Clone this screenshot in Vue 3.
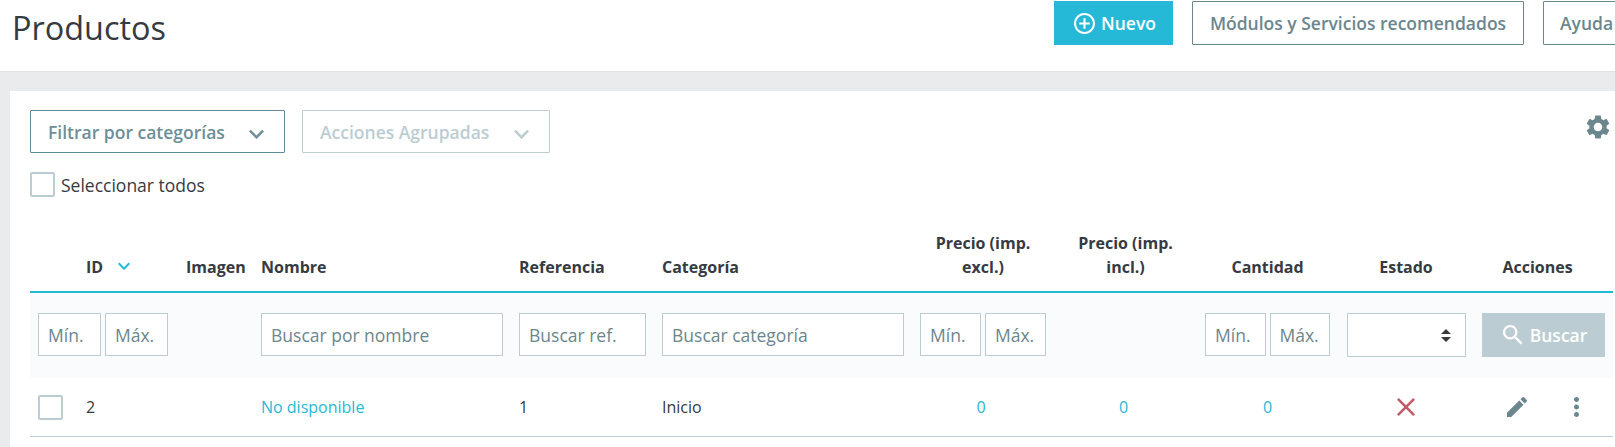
<template>
  <div class="page">
    <header class="head">
      <h1 class="title">Productos</h1>
      <button class="btn-new">
        <svg class="ico-new" viewBox="2 2 20 20"><path :d="icons.add" /></svg>
        Nuevo
      </button>
      <button class="btn-line">Módulos y Servicios recomendados</button>
      <button class="btn-line btn-help">Ayuda</button>
    </header>

    <main class="card">
      <div class="tools">
        <button class="drop">
          Filtrar por categorías
          <svg class="chev" viewBox="6 8 12 8"><path :d="icons.chevron" /></svg>
        </button>
        <button class="drop drop-off">
          Acciones Agrupadas
          <svg class="chev" viewBox="6 8 12 8"><path :d="icons.chevron" /></svg>
        </button>
        <svg class="gear" viewBox="2.5 2 19 20"><path :d="icons.gear" /></svg>
      </div>

      <label class="select-all">
        <span class="box"></span>
        <span class="select-text">Seleccionar todos</span>
      </label>

      <table class="grid">
        <colgroup>
          <col v-for="w in widths" :key="w.id" :style="{ width: w.px + 'px' }" />
        </colgroup>
        <thead>
          <tr class="titles">
            <th></th>
            <th>
              <span class="sort">ID
                <svg class="sort-ico" viewBox="6 8 12 8"><path :d="icons.chevron" /></svg>
              </span>
            </th>
            <th>Imagen</th>
            <th>Nombre</th>
            <th>Referencia</th>
            <th>Categoría</th>
            <th class="mid">Precio (imp. excl.)</th>
            <th class="mid">Precio (imp. incl.)</th>
            <th class="mid">Cantidad</th>
            <th class="mid">Estado</th>
            <th class="mid acts">Acciones</th>
          </tr>
          <tr class="filters">
            <td colspan="2">
              <div class="pair pair-id">
                <input placeholder="Mín." />
                <input placeholder="Máx." />
              </div>
            </td>
            <td></td>
            <td><input placeholder="Buscar por nombre" /></td>
            <td><input placeholder="Buscar ref." /></td>
            <td><input placeholder="Buscar categoría" /></td>
            <td>
              <div class="pair">
                <input placeholder="Mín." />
                <input placeholder="Máx." />
              </div>
            </td>
            <td></td>
            <td>
              <div class="pair">
                <input placeholder="Mín." />
                <input placeholder="Máx." />
              </div>
            </td>
            <td>
              <div class="state">
                <svg class="updown" viewBox="0 0 10 13"><path d="M5 0l5 5H0zM0 8h10l-5 5z" /></svg>
              </div>
            </td>
            <td>
              <button class="btn-search">
                <svg class="ico-search" viewBox="3 3 18 18"><path :d="icons.search" /></svg>
                Buscar
              </button>
            </td>
          </tr>
        </thead>
        <tbody>
          <tr class="row">
            <td><span class="box"></span></td>
            <td>2</td>
            <td></td>
            <td><a class="link">No disponible</a></td>
            <td>1</td>
            <td>Inicio</td>
            <td class="mid nudge"><a class="link">0</a></td>
            <td class="mid nudge"><a class="link">0</a></td>
            <td class="mid"><a class="link">0</a></td>
            <td class="mid">
              <svg class="ico-x" viewBox="5 5 14 14"><path :d="icons.close" /></svg>
            </td>
            <td>
              <div class="row-acts">
                <svg class="ico-edit" viewBox="3 3 18 18"><path :d="icons.edit" /></svg>
                <svg class="ico-more" viewBox="10 4 4 16"><path :d="icons.more" /></svg>
              </div>
            </td>
          </tr>
        </tbody>
      </table>
    </main>
  </div>
</template>

<script setup>
const widths = [48, 100, 75, 258, 143, 258, 142, 143, 141, 136, 139].map((px, id) => ({ id, px }));

const icons = {
  add: 'M13 7h-2v4H7v2h4v4h2v-4h4v-2h-4V7zm-1-5C6.48 2 2 6.48 2 12s4.48 10 10 10 10-4.48 10-10S17.52 2 12 2zm0 18c-4.41 0-8-3.59-8-8s3.59-8 8-8 8 3.59 8 8-3.59 8-8 8z',
  chevron: 'M16.59 8.59L12 13.17 7.41 8.59 6 10l6 6 6-6z',
  gear: 'M19.14 12.94c.04-.3.06-.61.06-.94 0-.32-.02-.64-.07-.94l2.03-1.58c.18-.14.23-.41.12-.61l-1.92-3.32c-.12-.22-.37-.29-.59-.22l-2.39.96c-.5-.38-1.03-.7-1.62-.94l-.36-2.54c-.04-.24-.24-.41-.48-.41h-3.84c-.24 0-.43.17-.47.41l-.36 2.54c-.59.24-1.13.57-1.62.94l-2.39-.96c-.22-.08-.47 0-.59.22L2.74 8.87c-.12.21-.08.47.12.61l2.03 1.58c-.05.3-.09.63-.09.94s.02.64.07.94l-2.03 1.58c-.18.14-.23.41-.12.61l1.92 3.32c.12.22.37.29.59.22l2.39-.96c.5.38 1.03.7 1.62.94l.36 2.54c.05.24.24.41.48.41h3.84c.24 0 .44-.17.47-.41l.36-2.54c.59-.24 1.13-.56 1.62-.94l2.39.96c.22.08.47 0 .59-.22l1.92-3.32c.12-.22.07-.47-.12-.61l-2.01-1.58zM12 15.6c-1.98 0-3.6-1.62-3.6-3.6s1.62-3.6 3.6-3.6 3.6 1.62 3.6 3.6-1.62 3.6-3.6 3.6z',
  search: 'M15.5 14h-.79l-.28-.27C15.41 12.59 16 11.11 16 9.5 16 5.91 13.09 3 9.5 3S3 5.91 3 9.5 5.91 16 9.5 16c1.61 0 3.09-.59 4.23-1.57l.27.28v.79l5 4.99L20.49 19l-4.99-5zm-6 0C7.01 14 5 11.99 5 9.5S7.01 5 9.5 5 14 7.01 14 9.5 11.99 14 9.5 14z',
  edit: 'M3 17.25V21h3.75L17.81 9.94l-3.75-3.75L3 17.25zM20.71 7.04c.39-.39.39-1.02 0-1.41l-2.34-2.34c-.39-.39-1.02-.39-1.41 0l-1.83 1.83 3.75 3.75 1.83-1.83z',
  more: 'M12 8c1.1 0 2-.9 2-2s-.9-2-2-2-2 .9-2 2 .9 2 2 2zm0 2c-1.1 0-2 .9-2 2s.9 2 2 2 2-.9 2-2-.9-2-2-2zm0 6c-1.1 0-2 .9-2 2s.9 2 2 2 2-.9 2-2-.9-2-2-2z',
  close: 'M19 6.41L17.59 5 12 10.59 6.41 5 5 6.41 10.59 12 5 17.59 6.41 19 12 13.41 17.59 19 19 17.59 13.41 12z',
};
</script>

<style>
html, body {
  margin: 0;
  overflow: hidden;
}
</style>

<style scoped>
.page {
  width: 1615px;
  height: 447px;
  overflow: hidden;
  background: #eaebec;
  font-family: "Open Sans", "Noto Sans", sans-serif;
  font-size: 16px;
  color: #363a41;
}

button {
  font-family: inherit;
  cursor: pointer;
}

.head {
  display: flex;
  align-items: flex-start;
  height: 70px;
  padding: 1px 0 0 12px;
  background: #fff;
  border-bottom: 1px solid #dfe1e2;
}

.title {
  flex: 0 0 1042px;
  margin: 0;
  font-size: 32.4px;
  font-weight: 400;
  line-height: 52px;
}

.btn-new {
  display: flex;
  flex: none;
  align-items: center;
  justify-content: center;
  gap: 6px;
  width: 119px;
  height: 44px;
  padding: 0 0 0 3px;
  border: 0;
  background: #25b9d7;
  color: #fff;
  font-size: 17.5px;
  font-weight: 600;
}

.ico-new {
  width: 21px;
  height: 21px;
  fill: #fff;
}

.btn-line {
  flex: none;
  width: 332px;
  height: 44px;
  margin-left: 19px;
  padding: 0;
  border: 1px solid #6c868e;
  border-radius: 1px;
  background: #fff;
  color: #6c868e;
  font-size: 17.5px;
  font-weight: 600;
}

.btn-help {
  width: 120px;
  padding-left: 16px;
  text-align: left;
}

.card {
  height: 356px;
  margin: 19px 0 0 10px;
  padding: 19px 2px 0 20px;
  background: #fff;
}

.tools {
  position: relative;
  display: flex;
  gap: 17px;
}

.drop {
  display: flex;
  align-items: center;
  justify-content: space-between;
  box-sizing: border-box;
  width: 255px;
  height: 43px;
  padding: 0 20px 0 17px;
  border: 1px solid #5f8a96;
  border-radius: 1px;
  background: #fff;
  color: #6c8f99;
  font-size: 17.5px;
  font-weight: 600;
}

.drop-off {
  width: 248px;
  border-color: #bbcdd2;
  color: #bbcdd2;
}

.chev {
  width: 15px;
  height: 10px;
  margin-top: 5px;
  fill: currentColor;
}

.gear {
  position: absolute;
  top: 5px;
  right: 3px;
  width: 24px;
  height: 24px;
  fill: #6c868e;
}

.select-all {
  display: flex;
  align-items: center;
  gap: 6px;
  height: 25px;
  margin-top: 19px;
  font-size: 17.5px;
  line-height: 25px;
}

.select-text {
  padding-top: 1px;
}

.box {
  display: block;
  box-sizing: border-box;
  width: 25px;
  height: 25px;
  border: 2px solid #bbcdd2;
  border-radius: 2px;
  background: #fff;
}

.grid {
  width: 1583px;
  margin-top: 26px;
  border-collapse: collapse;
  table-layout: fixed;
}

.titles th {
  height: 48px;
  padding: 8px 8px 12px;
  border-bottom: 2px solid #25b9d7;
  font-size: 16px;
  font-weight: 700;
  line-height: 24px;
  text-align: left;
  vertical-align: bottom;
}

.titles th.mid {
  text-align: center;
}

.titles th.acts {
  padding-right: 20px;
}

.sort {
  display: inline-flex;
  align-items: center;
  gap: 15px;
}

.sort-ico {
  width: 12px;
  height: 8px;
  margin-top: -3px;
  fill: #25b9d7;
}

.filters td {
  height: 84px;
  box-sizing: border-box;
  padding: 20px 8px 21px;
  background: #fafbfc;
  vertical-align: top;
}

input {
  display: block;
  box-sizing: border-box;
  width: 100%;
  min-width: 0;
  height: 43px;
  padding: 0 9px;
  border: 1px solid #bbcdd2;
  border-radius: 0;
  background: #fff;
  font-family: inherit;
  font-size: 17.5px;
  color: #363a41;
}

input::placeholder {
  color: #6c868e;
  opacity: 1;
}

.pair {
  display: flex;
  gap: 4px;
}

.pair-id {
  width: 130px;
}

.state {
  position: relative;
  box-sizing: border-box;
  height: 44px;
  margin-left: 1px;
  border: 1px solid #bbcdd2;
  background: #fff;
}

.updown {
  position: absolute;
  top: 15px;
  right: 14px;
  width: 10px;
  height: 13px;
  fill: #363a41;
}

.btn-search {
  display: flex;
  align-items: center;
  justify-content: center;
  gap: 7px;
  width: 100%;
  height: 44px;
  padding: 0 0 0 3px;
  border: 0;
  background: #bbcdd2;
  color: #fff;
  font-size: 17.5px;
  font-weight: 600;
}

.ico-search {
  width: 20px;
  height: 20px;
  fill: #fff;
}

.row td {
  height: 58px;
  box-sizing: border-box;
  padding: 1px 8px 0;
  border-bottom: 1px solid #bbcdd2;
  font-size: 16px;
  vertical-align: middle;
}

.row td.mid {
  text-align: center;
}

.row td.nudge {
  padding-right: 12px;
}

.link {
  color: #25b9d7;
}

.ico-x {
  display: block;
  width: 18px;
  height: 18px;
  margin: 0 auto;
  fill: #c05c67;
}

.row-acts {
  display: flex;
  align-items: center;
  padding-left: 25px;
  gap: 47px;
}

.ico-edit {
  width: 20px;
  height: 20px;
  fill: #6c868e;
}

.ico-more {
  width: 5px;
  height: 20px;
  fill: #6c868e;
}
</style>
